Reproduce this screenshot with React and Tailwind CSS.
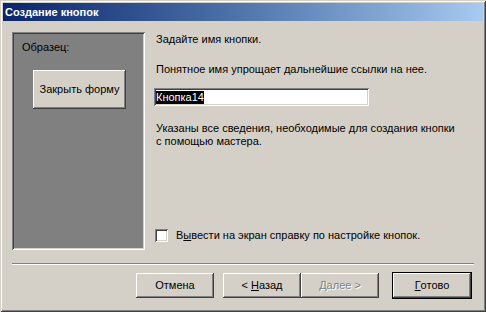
const raised = "shadow-[inset_-1px_-1px_#404040,inset_1px_1px_#ffffff,inset_-2px_-2px_#808080,inset_2px_2px_#d4d0c8]";
const sunken = "shadow-[inset_1px_1px_#808080,inset_-1px_-1px_#ffffff,inset_2px_2px_#404040,inset_-2px_-2px_#d4d0c8]";

function Btn({ children, disabled, isDefault }) {
    const inner = `flex h-[25px] w-[78px] items-center justify-center whitespace-pre bg-[#d4d0c8] ${raised} ${disabled ? "text-[#808080] [text-shadow:1px_1px_#ffffff]" : "text-black"}`;
    if (isDefault) {
        return (
            <div className="border border-black">
                <div className={inner}>{children}</div>
            </div>
        );
    }
    return <div className={inner}>{children}</div>;
}

export default function App() {
    return (
        <div className="h-[312px] w-[486px] bg-[#d4d0c8] p-[3px] font-['Liberation_Sans',sans-serif] text-[11px] leading-[13px] text-black shadow-[inset_1px_1px_#d4d0c8,inset_-1px_-1px_#404040,inset_2px_2px_#ffffff,inset_-2px_-2px_#808080]">
            <div className="flex h-[18px] items-center bg-gradient-to-r from-[#0a246a] to-[#a6caf0] pl-[2px] font-bold text-white">
                Создание кнопок
            </div>

            <div className="flex pl-[9px] pt-[11px]">
                <div className={`h-[218px] w-[133px] bg-[#808080] px-[10px] pt-[9px] ${sunken}`}>
                    <div>Образец:</div>
                    <div className={`ml-[11px] mt-[16px] flex h-[39px] w-[93px] items-center justify-center bg-[#d4d0c8] ${raised}`}>
                        Закрыть форму
                    </div>
                </div>

                <div className="ml-[9px] flex w-[320px] flex-col">
                    <div className="mt-[1px] pl-[2px]">Задайте имя кнопки.</div>
                    <div className="mt-[17px] pl-[2px]">Понятное имя упрощает дальнейшие ссылки на нее.</div>
                    <div className={`mt-[12px] flex h-[18px] w-[215px] items-center bg-white px-[2px] ${sunken}`}>
                        <span className="bg-black text-white">Кнопка14</span>
                    </div>
                    <div className="mt-[16px] pl-[2px]">
                        Указаны все сведения, необходимые для создания кнопки
                        <br />
                        с помощью мастера.
                    </div>
                    <div className="mt-[81px] flex items-center gap-[8px] pl-[1px]">
                        <div className={`h-[13px] w-[13px] bg-white ${sunken}`} />
                        <span>В<span className="underline">ы</span>вести на экран справку по настройке кнопок.</span>
                    </div>
                </div>
            </div>

            <div className="mx-[9px] mt-[13px] border-t border-b border-t-[#808080] border-b-white" />

            <div className="mt-[7px] flex items-center pl-[133px]">
                <Btn>Отмена</Btn>
                <div className="ml-[9px]">
                    <Btn>{"< "}<span className="underline">Н</span>азад</Btn>
                </div>
                <Btn disabled><span className="underline">Д</span>{"алее >"}</Btn>
                <div className="ml-[13px]">
                    <Btn isDefault><span className="underline">Г</span>отово</Btn>
                </div>
            </div>
        </div>
    );
}
